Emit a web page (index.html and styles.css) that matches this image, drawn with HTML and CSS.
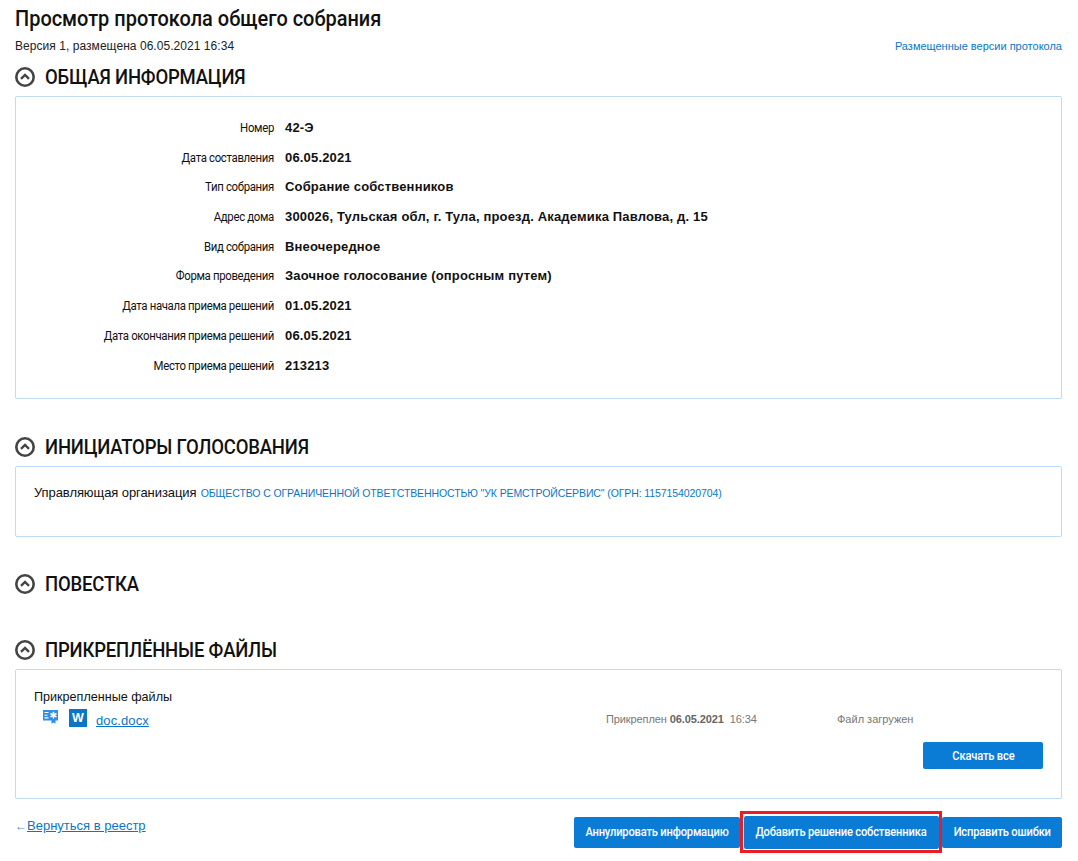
FILE: index.html
```html
<!DOCTYPE html>
<html lang="ru">
<head>
<meta charset="utf-8">
<title>Просмотр протокола общего собрания</title>
<link rel="stylesheet" href="styles.css">
</head>
<body>
<main class="page">
  <h1 class="title"><span class="narrow-text">Просмотр протокола общего собрания</span></h1>
  <div class="subline">
    <span class="version">Версия 1, размещена 06.05.2021 16:34</span>
    <a class="versions" href="#">Размещенные версии протокола</a>
  </div>

  <h2 class="section section-first">
    <svg class="chev" viewBox="0 0 20 20"><circle cx="10" cy="10" r="8.7" fill="none" stroke="#444" stroke-width="2.6"/><path d="M6 11.800 10 8l4 3.800" fill="none" stroke="#444" stroke-width="2.400"/></svg>
    <span class="section-text">ОБЩАЯ ИНФОРМАЦИЯ</span>
  </h2>
  <section class="panel panel-info">
    <dl class="info">
      <dt>Номер</dt><dd>42-Э</dd>
      <dt>Дата составления</dt><dd>06.05.2021</dd>
      <dt>Тип собрания</dt><dd>Собрание собственников</dd>
      <dt>Адрес дома</dt><dd>300026, Тульская обл, г. Тула, проезд. Академика Павлова, д. 15</dd>
      <dt>Вид собрания</dt><dd>Внеочередное</dd>
      <dt>Форма проведения</dt><dd>Заочное голосование (опросным путем)</dd>
      <dt>Дата начала приема решений</dt><dd>01.05.2021</dd>
      <dt>Дата окончания приема решений</dt><dd>06.05.2021</dd>
      <dt>Место приема решений</dt><dd>213213</dd>
    </dl>
  </section>

  <h2 class="section section-init">
    <svg class="chev" viewBox="0 0 20 20"><circle cx="10" cy="10" r="8.7" fill="none" stroke="#444" stroke-width="2.6"/><path d="M6 11.800 10 8l4 3.800" fill="none" stroke="#444" stroke-width="2.400"/></svg>
    <span class="section-text">ИНИЦИАТОРЫ ГОЛОСОВАНИЯ</span>
  </h2>
  <section class="panel panel-init">
    <span class="org-label">Управляющая организация</span>
    <a class="org" href="#">ОБЩЕСТВО С ОГРАНИЧЕННОЙ ОТВЕТСТВЕННОСТЬЮ "УК РЕМСТРОЙСЕРВИС" (ОГРН: 1157154020704)</a>
  </section>

  <h2 class="section section-agenda">
    <svg class="chev" viewBox="0 0 20 20"><circle cx="10" cy="10" r="8.7" fill="none" stroke="#444" stroke-width="2.6"/><path d="M6 11.800 10 8l4 3.800" fill="none" stroke="#444" stroke-width="2.400"/></svg>
    <span class="section-text">ПОВЕСТКА</span>
  </h2>

  <h2 class="section section-files">
    <svg class="chev" viewBox="0 0 20 20"><circle cx="10" cy="10" r="8.7" fill="none" stroke="#444" stroke-width="2.6"/><path d="M6 11.800 10 8l4 3.800" fill="none" stroke="#444" stroke-width="2.400"/></svg>
    <span class="section-text">ПРИКРЕПЛЁННЫЕ ФАЙЛЫ</span>
  </h2>
  <section class="panel panel-files">
    <div class="plain">Прикрепленные файлы</div>
    <div class="file-row">
      <svg class="sig" viewBox="0 0 15 14"><path fill="#2f8fe6" d="M0 0h15v10.500h-2.500v3.300l-2-1.300-2 1.300v-3.300H0z"/><path stroke="#fff" stroke-width="1.100" d="M1.500 2.500h4M1.500 5.200h3M1.500 7.900h4"/><path stroke="#fff" stroke-width="1.600" d="M10.500 1.800v6.800M7.500 3.500l6 3.400M13.500 3.500l-6 3.400"/></svg>
      <svg class="word" viewBox="0 0 18 18"><rect width="18" height="18" fill="#0b76c8"/><text class="word-w" x="9" y="13.200" text-anchor="middle">W</text></svg>
      <a class="file-link" href="#">doc.docx</a>
      <span class="attached">Прикреплен <b>06.05.2021</b>&nbsp; 16:34</span>
      <span class="loaded">Файл загружен</span>
    </div>
    <div class="download-row"><button class="btn btn-download"><span class="btn-text">Скачать все</span></button></div>
  </section>

  <footer class="footer">
    <a class="back" href="#"><span class="arrow">←</span><u>Вернуться в реестр</u></a>
    <div class="actions">
      <button class="btn btn-annul"><span class="btn-text">Аннулировать информацию</span></button>
      <span class="highlight"><button class="btn btn-add"><span class="btn-text">Добавить решение собственника</span></button></span>
      <button class="btn btn-fix"><span class="btn-text">Исправить ошибки</span></button>
    </div>
  </footer>
</main>
</body>
</html>
```

FILE: styles.css
```css
* { box-sizing: border-box; }
html, body { margin: 0; padding: 0; background: #fff; }
body { font-family: "Liberation Sans", Arial, sans-serif; font-size: 12px; color: #111; }
.page { width: 1078px; height: 861px; padding: 0 16px 0 15px; overflow: hidden; }
.title { margin: 0; padding-top: 6px; height: 38px; font: 500 21.500px/26px Roboto, sans-serif; color: #111; }
.narrow-text { display: inline-block; white-space: nowrap; transform: scaleX(.928); transform-origin: left center; }
.subline { display: flex; justify-content: space-between; align-items: center; height: 16px; font-size: 12px; line-height: 16px; color: #222; }
.version { letter-spacing: 0.05px; }
.versions { font-size: 11px; color: #0b76c8; text-decoration: none; }
.section { display: flex; align-items: center; gap: 10px; margin: 0; height: 24px; font: 500 20.500px/24px Roboto, sans-serif; color: #111; letter-spacing: -0.2px; }
.section-text { display: inline-block; white-space: nowrap; transform: scaleX(.902); transform-origin: left center; }
.section-first { margin-top: 11px; margin-bottom: 7px; }
.section-init { margin-top: 36px; margin-bottom: 7px; }
.section-agenda { margin-top: 35px; }
.section-files { margin-top: 42px; margin-bottom: 7px; }
.chev { width: 20px; height: 20px; flex: none; }
.panel { border: 1px solid #bfdcf5; border-radius: 2px; background: #fff; }
.panel-info { height: 303px; padding-top: 17px; }
.info { display: grid; grid-template-columns: 258px 1fr; grid-auto-rows: 29.700px; column-gap: 11px; margin: 0; align-items: start; }
.info dt { text-align: right; font: 400 12px/29px Roboto, sans-serif; letter-spacing: -0.35px; color: #111; transform: scaleX(.95); transform-origin: right center; white-space: nowrap; }
.info dd { margin: 0; font: 700 13px/28px "Liberation Sans", sans-serif; letter-spacing: 0.17px; color: #111; }
.panel-init { height: 71px; padding: 18px 18px 0; line-height: 16px; }
.org-label { font-size: 13px; line-height: 16px; color: #111; letter-spacing: -0.08px; }
.plain { font-size: 12.600px; line-height: 16px; color: #111; padding-top: 1px; height: 17px; }
.org { margin-left: 1px; font: 400 10.500px/16px "Liberation Sans", sans-serif; color: #0b76c8; text-decoration: none; letter-spacing: -0.1px; }
.panel-files { height: 130px; padding: 18px 18px 0; }
.file-row { display: flex; align-items: flex-start; height: 29px; margin-top: 4px; padding-left: 9px; }
.sig { width: 15px; height: 14px; margin-top: 1px; flex: none; }
.word { width: 18px; height: 18px; margin-left: 11px; flex: none; }
.word-w { font: 700 12.500px "Liberation Sans", sans-serif; fill: #fff; }
.file-link { margin: 4px 0 0 9px; width: 510px; flex: none; font-size: 13px; line-height: 16px; color: #0b76c8; letter-spacing: 0.1px; }
.attached { margin-top: 3px; width: 231px; flex: none; font-size: 11px; line-height: 14px; color: #777; letter-spacing: -0.1px; }
.attached b { color: #666; }
.loaded { margin-top: 3px; font-size: 11px; line-height: 14px; color: #777; }
.download-row { display: flex; justify-content: flex-end; margin-top: 4px; }
.btn { display: flex; align-items: center; justify-content: center; flex: none; border: 0; border-radius: 2px; background: #0b7cd6; color: #fff; font: 500 12px/16px Roboto, sans-serif; letter-spacing: -0.2px; padding: 0; cursor: pointer; }
.btn-text { display: inline-block; white-space: nowrap; transform: scaleX(.93); }
.btn-download { width: 120px; height: 27px; }
.footer { display: flex; justify-content: space-between; align-items: flex-start; margin-top: 12px; }
.back { font-size: 13px; line-height: 16px; margin-top: 7px; color: #0b76c8; text-decoration: none; }
.arrow { color: #4a90c9; font-size: 12px; }
.actions { display: flex; align-items: center; }
.btn-annul { width: 166px; height: 31px; }
.highlight { display: flex; align-items: center; justify-content: center; flex: none; width: 202px; height: 42px; border: 3px solid #ed1c24; background: #fff; }
.btn-add { width: 195px; height: 33px; }
.btn-fix { width: 120px; height: 31px; }
```
